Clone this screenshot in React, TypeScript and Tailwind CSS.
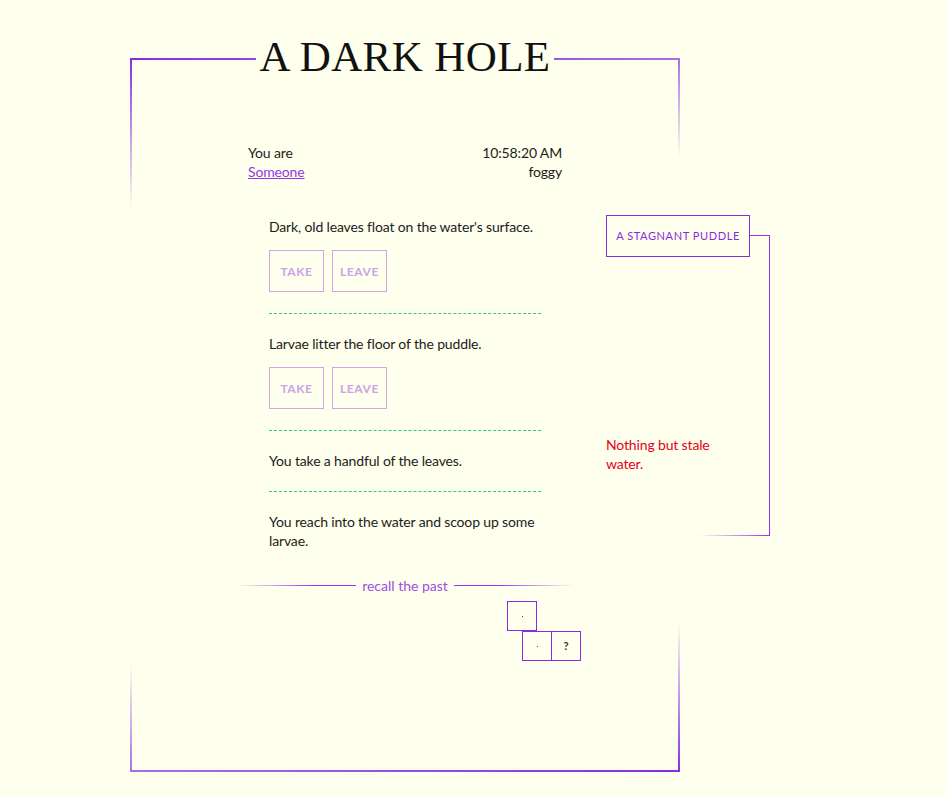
import type { ReactNode } from 'react'

const story = [
  { text: "Dark, old leaves float on the water's surface.", actions: true },
  { text: 'Larvae litter the floor of the puddle.', actions: true },
  { text: 'You take a handful of the leaves.', actions: false },
  { text: 'You reach into the water and scoop up some larvae.', actions: false },
]

function ActionButton({ children }: { children: ReactNode }) {
  return (
    <button className="flex h-[42px] w-[55px] items-center justify-center border border-[#d3a4ea] text-[12px] font-bold uppercase tracking-[0.6px] text-[#cba3ea]">
      {children}
    </button>
  )
}

function NavBox({ children }: { children?: ReactNode }) {
  return (
    <div className="flex h-[30px] w-[30px] shrink-0 items-center justify-center border border-[#8a2be2] text-[11px] font-bold text-[#333]">
      {children ?? <span className="h-px w-px bg-[#ff0000]" />}
    </div>
  )
}

export default function App() {
  return (
    <div className="min-h-screen bg-[#feffec] pl-[130px] pt-[35px] font-['Lato',sans-serif] text-[#1c1c1c]">
      <div className="flex items-start">
        <main className="relative h-[737px] w-[550px] shrink-0">
          {/* frame edges */}
          <div className="absolute bottom-0 left-0 top-[23px] w-[2px] bg-[linear-gradient(to_bottom,#8a2be2,transparent_21%,transparent_85%,#a86ee3)]" />
          <div className="absolute bottom-0 right-0 top-[23px] w-[2px] bg-[linear-gradient(to_bottom,#a86ee3,transparent_14%,transparent_79%,#8a2be2)]" />
          <div className="absolute bottom-0 left-0 right-0 h-[2px] bg-[linear-gradient(to_right,#a86ee3,#8a2be2)]" />

          <header className="flex items-start">
            <span className="mt-[23px] h-[2px] flex-1 bg-[linear-gradient(to_right,#8a2be2,#9443e2)]" />
            <h1 className="px-[3px] font-['Liberation_Serif',serif] text-[43px] leading-[44px] tracking-[0.4px] text-[#111]">
              A DARK HOLE
            </h1>
            <span className="mt-[23px] h-[2px] flex-1 bg-[linear-gradient(to_right,#9c57e2,#a86ee3)]" />
          </header>

          <div className="mx-auto mt-[64px] flex w-[314px] justify-between text-[14px] leading-[19px] tracking-[-0.15px]">
            <div>
              <div>You are</div>
              <a href="#" className="text-[#9337e6] underline">
                Someone
              </a>
            </div>
            <div className="text-right">
              <div>10:58:20 AM</div>
              <div>foggy</div>
            </div>
          </div>

          <div className="mx-auto mt-[16px] w-[272px] text-[14px] leading-[19px] tracking-[-0.15px]">
            {story.map((item, i) => (
              <div
                key={i}
                className={i === 0 ? 'pb-[21px] pt-[20px]' : 'border-t border-dashed border-[#2ccb7c] pb-[21px] pt-[20px]'}
              >
                <p>{item.text}</p>
                {item.actions && (
                  <div className="mt-[14px] flex gap-[8px]">
                    <ActionButton>Take</ActionButton>
                    <ActionButton>Leave</ActionButton>
                  </div>
                )}
              </div>
            ))}
          </div>

          <div className="mx-auto mt-[5px] w-[340px]">
            <div className="flex items-center gap-[6px] text-[14px] leading-[19px] text-[#a14ee6]">
              <span className="h-px flex-1 bg-[linear-gradient(to_right,transparent,#9633f0_65%)]" />
              <span>recall the past</span>
              <span className="h-px flex-1 bg-[linear-gradient(to_right,#9633f0_35%,transparent)]" />
            </div>
            <div className="mt-[6px] flex pl-[272px]">
              <NavBox />
            </div>
            <div className="flex pl-[287px]">
              <NavBox />
              <div className="-ml-px shrink-0">
                <NavBox>?</NavBox>
              </div>
            </div>
          </div>
        </main>

        <aside className="ml-[-74px] mt-[180px] flex items-start">
          <div className="w-[144px]">
            <div className="flex h-[42px] items-center justify-center border border-[#8a2be2] text-[11px] uppercase tracking-[0.6px] text-[#8a2be2]">
              A stagnant puddle
            </div>
            <p className="mt-[178px] w-[118px] text-[14px] leading-[19px] tracking-[-0.15px] text-[#e6001e]">
              Nothing but stale water.
            </p>
          </div>
          <div className="relative mt-[20px] h-[301px] w-[20px] border-r border-t border-[#9633f0]">
            <span className="absolute bottom-0 right-0 h-px w-[70px] bg-[linear-gradient(to_right,transparent,#9633f0)]" />
          </div>
        </aside>
      </div>
    </div>
  )
}
